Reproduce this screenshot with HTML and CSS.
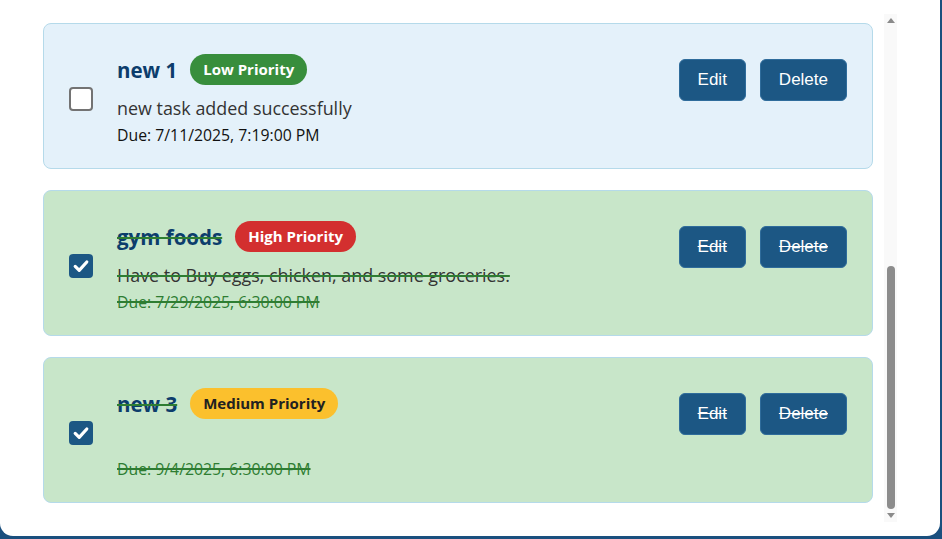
FILE: index.html
```html
<!DOCTYPE html>
<html lang="en">
<head>
<meta charset="utf-8">
<title>Tasks</title>
<link rel="stylesheet" href="styles.css">
</head>
<body>
<div class="panel">
  <div class="list-wrap">
    <div class="list">
      <div class="card card-open">
        <span class="checkbox"></span>
        <div class="info">
          <div class="title-row">
            <h3 class="title">new 1</h3>
            <span class="badge badge-low">Low Priority</span>
          </div>
          <p class="desc">new task added successfully</p>
          <p class="due">Due: 7/11/2025, 7:19:00 PM</p>
        </div>
        <div class="actions">
          <button class="btn">Edit</button>
          <button class="btn">Delete</button>
        </div>
      </div>

      <div class="card card-done">
        <span class="checkbox checked"><svg viewBox="0 0 24 24" width="24" height="24"><path d="M6.2 12.4 L10.2 16.3 L17.8 8" fill="none" stroke="#fff" stroke-width="3.2" stroke-linecap="round" stroke-linejoin="round"/></svg></span>
        <div class="info">
          <div class="title-row">
            <h3 class="title">gym foods</h3>
            <span class="badge badge-high">High Priority</span>
          </div>
          <p class="desc">Have to Buy eggs, chicken, and some groceries.</p>
          <p class="due">Due: 7/29/2025, 6:30:00 PM</p>
        </div>
        <div class="actions">
          <button class="btn">Edit</button>
          <button class="btn">Delete</button>
        </div>
      </div>

      <div class="card card-done">
        <span class="checkbox checked"><svg viewBox="0 0 24 24" width="24" height="24"><path d="M6.2 12.4 L10.2 16.3 L17.8 8" fill="none" stroke="#fff" stroke-width="3.2" stroke-linecap="round" stroke-linejoin="round"/></svg></span>
        <div class="info">
          <div class="title-row">
            <h3 class="title">new 3</h3>
            <span class="badge badge-medium">Medium Priority</span>
          </div>
          <p class="desc"></p>
          <p class="due">Due: 9/4/2025, 6:30:00 PM</p>
        </div>
        <div class="actions">
          <button class="btn">Edit</button>
          <button class="btn">Delete</button>
        </div>
      </div>
    </div>

    <div class="scrollbar">
      <span class="arrow arrow-up"></span>
      <div class="track">
        <div class="thumb"></div>
      </div>
      <span class="arrow arrow-down"></span>
    </div>
  </div>
</div>
</body>
</html>
```

FILE: styles.css
```css
html, body {
  margin: 0;
  padding: 0;
}

body {
  background: #1a4f7e;
  height: 539px;
  overflow: hidden;
  font-family: "Segoe UI", "Open Sans", "Noto Sans", sans-serif;
}

.panel {
  width: 940px;
  height: 536px;
  background: #ffffff;
  border-radius: 0 0 13px 13px;
  padding: 14px 43px 0 43px;
  box-sizing: border-box;
}

.list-wrap {
  display: flex;
  height: 508px;
}

.list {
  width: 830px;
  margin-right: 11px;
  padding-top: 9px;
  display: flex;
  flex-direction: column;
  gap: 21px;
  overflow: hidden;
}

.card {
  flex: none;
  height: 146px;
  box-sizing: border-box;
  border: 1px solid #b5daea;
  border-radius: 8px;
  padding: 20px 25px;
  display: flex;
  align-items: flex-start;
}

.card-open {
  background: #e4f1fa;
}

.card-done {
  background: #c8e6c9;
}

.checkbox {
  flex: none;
  width: 24px;
  height: 24px;
  box-sizing: border-box;
  margin-top: 43px;
  margin-right: 24px;
  border: 2px solid #737373;
  border-radius: 4px;
  background: #ffffff;
  display: flex;
}

.checkbox.checked {
  border: none;
  background: #1c5784;
}

.info {
  flex: 1;
  min-width: 0;
}

.title-row {
  display: flex;
  align-items: center;
  gap: 13px;
  margin-top: 10px;
  height: 31px;
}

.title {
  margin: 0;
  font-size: 20.5px;
  font-weight: 700;
  color: #0c3d6c;
  line-height: 26px;
}

.badge {
  font-size: 15px;
  font-weight: 700;
  line-height: 19px;
  padding: 6px 13px;
  border-radius: 16px;
  color: #ffffff;
}

.badge-low {
  background: #388e3c;
}

.badge-high {
  background: #d32f2f;
}

.badge-medium {
  background: #fbc02d;
  color: #212121;
}

.desc {
  margin: 11px 0 0 0;
  height: 24px;
  font-size: 17.9px;
  line-height: 24px;
  color: #333333;
}

.due {
  margin: 4px 0 0 0;
  font-size: 15.8px;
  line-height: 23px;
  color: #111111;
}

.card-done .title,
.card-done .desc,
.card-done .due {
  text-decoration: line-through;
  text-decoration-color: #2e7d32;
  text-decoration-thickness: 2px;
}

.card-done .due {
  color: #2e7d32;
}

.actions {
  flex: none;
  display: flex;
  gap: 14px;
  margin-top: 15px;
}

.btn {
  height: 42px;
  padding: 0 18px;
  border: 1px solid #2f6c9b;
  border-radius: 6px;
  background: #1c5784;
  color: #ffffff;
  font-family: "Liberation Sans", Arial, sans-serif;
  font-size: 17px;
}

.card-done .btn {
  text-decoration: line-through;
}

.scrollbar {
  flex: none;
  width: 13px;
  background: #f9f9f9;
  display: flex;
  flex-direction: column;
  align-items: center;
}

.arrow {
  flex: none;
  width: 0;
  height: 0;
  border-left: 4px solid transparent;
  border-right: 4px solid transparent;
}

.arrow-up {
  margin-top: 4px;
  margin-bottom: 5px;
  border-bottom: 5px solid #8a8a8a;
}

.arrow-down {
  margin-top: 4px;
  margin-bottom: 4px;
  border-top: 5px solid #8a8a8a;
}

.track {
  flex: 1;
  width: 100%;
  display: flex;
  flex-direction: column;
  align-items: center;
  justify-content: flex-end;
}

.thumb {
  width: 8px;
  height: 243px;
  background: #8c8c8c;
  border-radius: 4px;
}
```
